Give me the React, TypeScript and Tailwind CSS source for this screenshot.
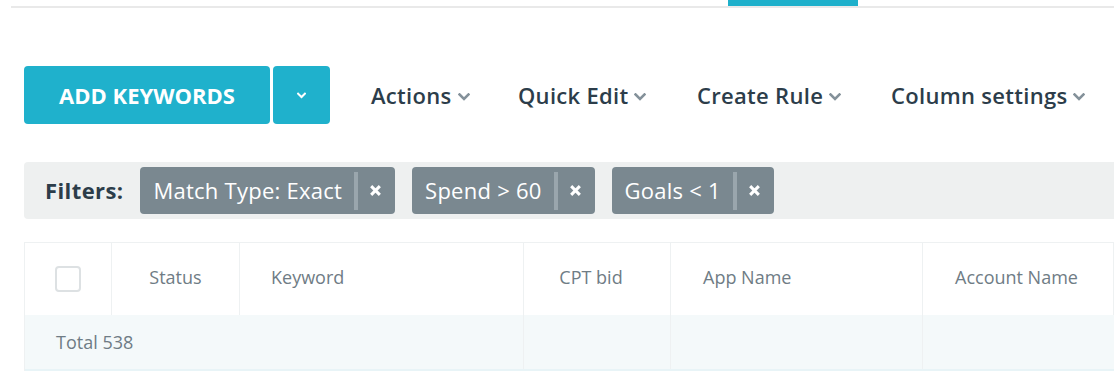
import React from 'react';

const font = { fontFamily: '"Open Sans", "Liberation Sans", sans-serif' };

const Chevron = ({ className }: { className?: string }) => (
  <svg viewBox="0 0 12 8" className={className} fill="none">
    <path d="M1.5 1.5 6 6l4.5-4.5" stroke="currentColor" strokeWidth="2.6" strokeLinecap="square" />
  </svg>
);

const menus = [
  { label: 'Actions', w: 'w-[147px]' },
  { label: 'Quick Edit', w: 'w-[179px]' },
  { label: 'Create Rule', w: 'w-[194px]' },
  { label: 'Column settings', w: '' },
];

const filters = ['Match Type: Exact', 'Spend > 60', 'Goals < 1'];

const columns = [
  { label: 'Status', w: 'w-[128px]', align: 'justify-center' },
  { label: 'Keyword', w: 'w-[284px]', align: 'pl-[31px]' },
  { label: 'CPT bid', w: 'w-[147px]', align: 'justify-center pr-[12px]' },
  { label: 'App Name', w: 'w-[252px]', align: 'pl-[32px]' },
  { label: 'Account Name', w: 'flex-1', align: 'pl-[32px]' },
];

export default function App() {
  return (
    <div className="w-[1114px] h-[374px] overflow-hidden bg-white" style={font}>
      {/* tabs underline */}
      <div className="h-[6px] pl-[728px]">
        <div className="w-[130px] h-full bg-[#1eb0cb]" />
      </div>
      <div className="h-[2px] ml-[11px] bg-[#e9e9e9]" />

      {/* toolbar */}
      <div className="mt-[58px] ml-[24px] flex items-center">
        <button className="w-[246px] h-[58px] rounded-[4px] bg-[#1fb1cc] text-white text-[22px] font-bold">
          ADD KEYWORDS
        </button>
        <button className="ml-[3px] w-[57px] h-[58px] rounded-[4px] bg-[#1fb1cc] flex items-center justify-center text-white">
          <Chevron className="w-[9px] h-[7px]" />
        </button>
        <div className="ml-[41px] flex items-center">
          {menus.map((m) => (
            <div key={m.label} className={`${m.w} flex items-center gap-[6px] text-[#2c3d4a] text-[22px] font-semibold tracking-[0.3px]`}>
              <span>{m.label}</span>
              <Chevron className="w-[12px] h-[8px] text-[#84919a] mt-[3px]" />
            </div>
          ))}
        </div>
      </div>

      {/* filters */}
      <div className="mt-[38px] ml-[24px] h-[57px] rounded-l-[4px] bg-[#eef0f0] flex items-center pl-[21px] gap-[17px]">
        <span className="text-[22px] font-bold text-[#2c3d4a] tracking-[0.4px]">Filters:</span>
        {filters.map((f) => (
          <div key={f} className="h-[47px] rounded-[4px] bg-[#7a8890] flex items-center pl-[13px] pr-[13px] text-white">
            <span className="text-[22px] tracking-[0.25px]">{f}</span>
            <span className="ml-[12px] w-[4px] h-[38px] bg-[#9aa6ad]" />
            <svg viewBox="0 0 12 12" className="ml-[11px] w-[13px] h-[13px]">
              <path d="M2 2l8 8M10 2l-8 8" stroke="white" strokeWidth="2.8" />
            </svg>
          </div>
        ))}
      </div>

      {/* table */}
      <div className="mt-[23px] ml-[24px] border-l border-t border-[#eef1f2]">
        <div className="flex h-[72px] bg-white text-[18px] text-[#6f7c85]">
          <div className="w-[87px] border-r border-[#eef1f2] flex items-center justify-center">
            <div className="w-[26px] h-[26px] rounded-[4px] border-2 border-[#dde1e3] bg-white" />
          </div>
          {columns.map((c) => (
            <div key={c.label} className={`${c.w} ${c.align} flex items-center pb-[3px] border-r border-[#eef1f2]`}>
              {c.label}
            </div>
          ))}
        </div>
        <div className="flex h-[56px] bg-[#f4f9fa] border-b-2 border-[#e8f4f7] text-[18px] text-[#6f7c85]">
          <div className="w-[499px] flex items-center pl-[31px] border-r border-[#eef1f2]">Total 538</div>
          <div className="w-[147px] border-r border-[#eef1f2]" />
          <div className="w-[252px] border-r border-[#eef1f2]" />
          <div className="flex-1" />
        </div>
      </div>
    </div>
  );
}
